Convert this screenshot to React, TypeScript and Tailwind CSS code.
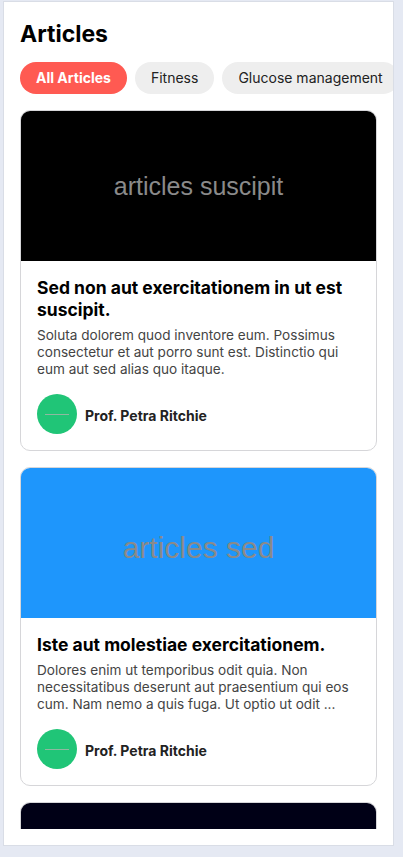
import React from "react";

type Article = {
  image: string;
  imageBg: string;
  imageText: string;
  imageTextSize: string;
  title: string;
  desc: string;
  author: string;
};

const articles: Article[] = [
  {
    image: "a",
    imageBg: "bg-[#000000]",
    imageText: "articles suscipit",
    imageTextSize: "text-[25px] pt-[2px]",
    title: "Sed non aut exercitationem in ut est suscipit.",
    desc: "Soluta dolorem quod inventore eum. Possimus consectetur et aut porro sunt est. Distinctio qui eum aut sed alias quo itaque.",
    author: "Prof. Petra Ritchie",
  },
  {
    image: "b",
    imageBg: "bg-[#1e96fc]",
    imageText: "articles sed",
    imageTextSize: "text-[30px] pt-[8px]",
    title: "Iste aut molestiae exercitationem.",
    desc: "Dolores enim ut temporibus odit quia. Non necessitatibus deserunt aut praesentium qui eos cum. Nam nemo a quis fuga. Ut optio ut odit ...",
    author: "Prof. Petra Ritchie",
  },
  {
    image: "c",
    imageBg: "bg-[#000016]",
    imageText: "articles quia",
    imageTextSize: "text-[26px]",
    title: "Quia voluptas et ut rerum.",
    desc: "Ut odio dolorem quia. Sit et expedita et est.",
    author: "Prof. Petra Ritchie",
  },
];

function Card({ a }: { a: Article }) {
  return (
    <div className="shrink-0 overflow-hidden rounded-[10px] border border-[#d6d6d9] bg-white">
      <div
        className={`flex h-[150px] items-center justify-center ${a.imageBg} ${a.imageTextSize} text-[#8a8a8a]`}
        style={{ fontFamily: '"Liberation Sans", Arial, sans-serif' }}
      >
        {a.imageText}
      </div>
      <div className="p-4">
        <h2 className="text-[17.5px] font-bold leading-[22px] text-black">{a.title}</h2>
        <p className="mt-[6px] text-[13.6px] leading-[17px] text-[#444444]">{a.desc}</p>
        <div className="mt-4 flex items-center gap-2">
          <div className="flex h-10 w-10 items-center justify-center rounded-full bg-[#20c577]">
            <div className="h-px w-6 bg-[#8fb8a0]" />
          </div>
          <span className="pt-[2px] text-[14px] font-bold text-[#222222]">{a.author}</span>
        </div>
      </div>
    </div>
  );
}

export default function App() {
  return (
    <div
      className="h-[857px] w-[403px] bg-[#e5e9f3] pl-[3px] pt-px"
      style={{ fontFamily: 'Inter, "Noto Sans", sans-serif' }}
    >
      <div className="flex h-[845px] w-[391px] flex-col overflow-hidden border border-[#d9dde6] bg-white p-4">
        <h1 className="text-[23px] font-bold leading-8 text-black">Articles</h1>
        <div className="-mr-4 mt-3 flex gap-2 overflow-hidden whitespace-nowrap">
          <span className="shrink-0 rounded-full bg-[#ff5a52] px-4 py-1.5 text-[14px] font-bold leading-5 text-white">
            All Articles
          </span>
          <span className="shrink-0 rounded-full bg-[#eeeeee] px-4 py-1.5 text-[14px] leading-5 text-[#222222]">
            Fitness
          </span>
          <span className="shrink-0 rounded-full bg-[#eeeeee] px-4 py-1.5 text-[14px] leading-5 text-[#222222]">
            Glucose management
          </span>
        </div>
        <div className="mt-4 flex min-h-0 flex-1 flex-col gap-4 overflow-hidden">
          {articles.map((a) => (
            <Card key={a.image} a={a} />
          ))}
        </div>
      </div>
    </div>
  );
}
